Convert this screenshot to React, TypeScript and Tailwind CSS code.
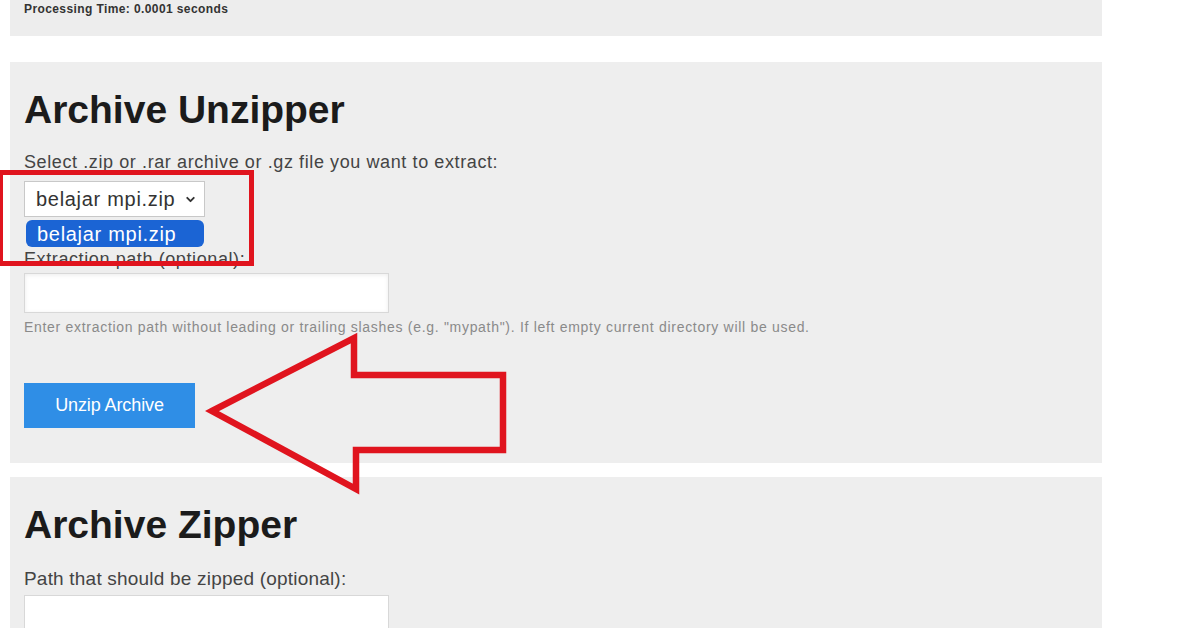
import { ChevronDown } from 'lucide-react';

const font = { fontFamily: '"Liberation Sans", Arial, sans-serif' };

export default function App() {
  return (
    <div className="relative h-[628px] w-[1196px] overflow-hidden bg-white text-[#222]" style={font}>
      <div className="ml-[10px] w-[1092px]">
        {/* status panel */}
        <div className="h-[36px] bg-[#ededed] pl-[14px] pt-[1px]">
          <p className="text-[12px] font-semibold leading-[16px] tracking-[0.4px] text-[#333]">Processing Time: 0.0001 seconds</p>
        </div>

        {/* unzipper */}
        <section className="mt-[26px] h-[401px] bg-[#eeeeee] pl-[14px] pt-[26px]">
          <h1 className="text-[39px] font-bold leading-[44px] text-[#1b1b1b]">Archive Unzipper</h1>
          <p className="mt-[20px] text-[18px] leading-[20px] tracking-[0.6px] text-[#444]">
            Select .zip or .rar archive or .gz file you want to extract:
          </p>
          <div className="mt-[9px] flex h-[36px] w-[181px] items-center justify-between border border-[#c8c8c8] bg-white pl-[11px] pr-[7px]">
            <span className="text-[20px] tracking-[0.7px] text-[#333]">belajar mpi.zip</span>
            <ChevronDown className="h-[13px] w-[13px] text-[#333]" strokeWidth={3.5} />
          </div>
          <div className="ml-[2px] mt-[3px] flex h-[27px] w-[178px] items-center rounded-[6px] bg-[#1b64d4] pl-[11px] text-[20px] tracking-[0.7px] text-white">
            belajar mpi.zip
          </div>
          <p className="mt-[2px] text-[18px] leading-[20px] tracking-[0.6px] text-[#444]">Extraction path (optional):</p>
          <div className="mt-[4px] h-[40px] w-[365px] border border-[#d8d8d8] bg-white shadow-[inset_0_1px_4px_rgba(0,0,0,0.08)]" />
          <p className="mt-[7px] text-[14px] leading-[14px] tracking-[0.7px] text-[#8a8a8a]">
            Enter extraction path without leading or trailing slashes (e.g. "mypath"). If left empty current directory will be used.
          </p>
          <button className="mt-[49px] flex h-[45px] w-[171px] items-center justify-center bg-[#2f8ee6] text-[18px] tracking-[-0.1px] text-white">
            Unzip Archive
          </button>
        </section>

        {/* zipper */}
        <section className="mt-[14px] h-[160px] bg-[#eeeeee] pl-[14px] pt-[26px]">
          <h1 className="text-[39px] font-bold leading-[44px] text-[#1b1b1b]">Archive Zipper</h1>
          <p className="mt-[22px] text-[19px] leading-[20px] tracking-[0.2px] text-[#444]">Path that should be zipped (optional):</p>
          <div className="mt-[6px] h-[40px] w-[365px] border border-[#d8d8d8] bg-white" />
        </section>
      </div>

      {/* red highlight box */}
      <div className="absolute left-[-2px] top-[170px] h-[96px] w-[256px] border-[5px] border-[#e0141e]" />

      {/* red arrow */}
      <svg className="absolute left-0 top-0" width="1196" height="628" viewBox="0 0 1196 628" fill="none">
        <polygon
          points="212,411 354,338 354,375 503,375 503,450 356,450 356,489"
          stroke="#e0141e"
          strokeWidth="6.5"
          strokeLinejoin="miter"
        />
      </svg>
    </div>
  );
}
